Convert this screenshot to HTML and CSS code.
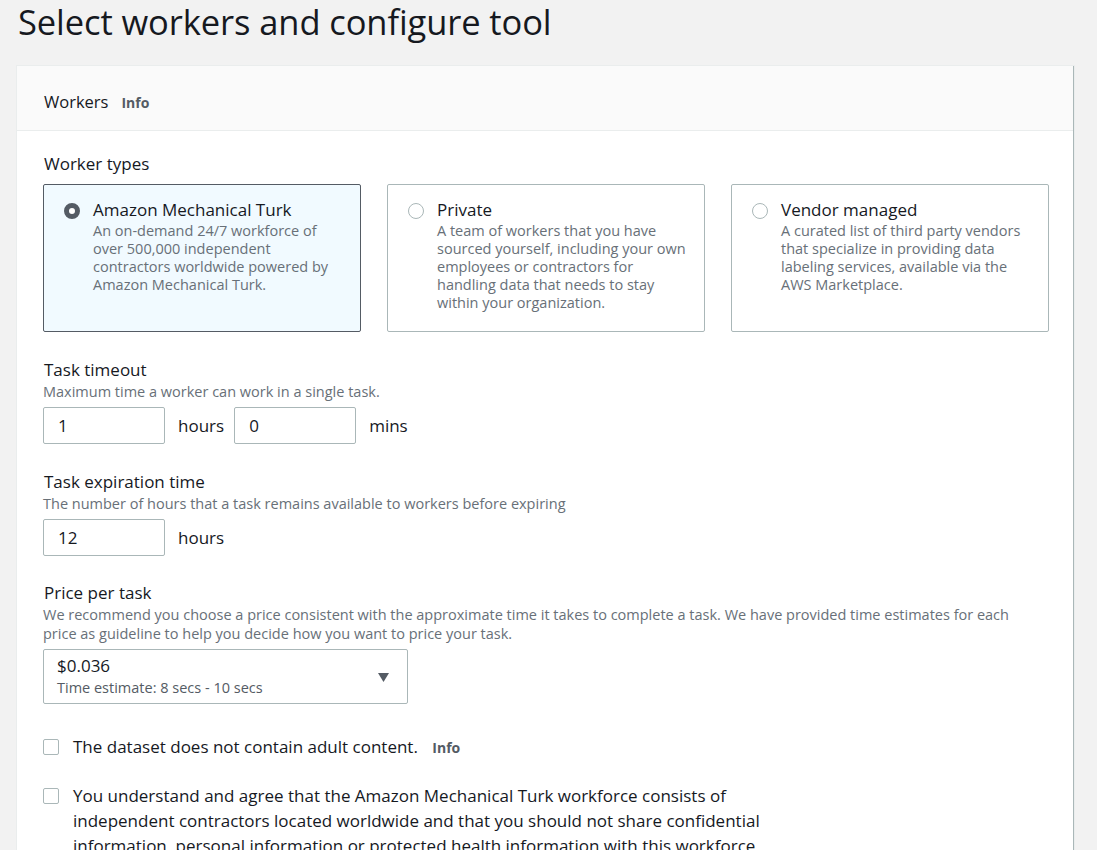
FILE: index.html
```html
<!DOCTYPE html>
<html lang="en">
<head>
<meta charset="utf-8">
<title>Select workers and configure tool</title>
<link rel="stylesheet" href="styles.css">
</head>
<body>
<h1 class="page-title">Select workers and configure tool</h1>
<section class="panel">
  <header class="panel-header">
    <h2 class="panel-title">Workers</h2>
    <span class="info">Info</span>
  </header>
  <div class="panel-body">
    <div class="field">
      <div class="label">Worker types</div>
      <div class="tiles">
        <label class="tile selected">
          <span class="radio checked"></span>
          <span class="tile-text">
            <span class="tile-title">Amazon Mechanical Turk</span>
            <span class="tile-desc">An on-demand 24/7 workforce of over 500,000 independent contractors worldwide powered by Amazon Mechanical Turk.</span>
          </span>
        </label>
        <label class="tile">
          <span class="radio"></span>
          <span class="tile-text">
            <span class="tile-title">Private</span>
            <span class="tile-desc">A team of workers that you have sourced yourself, including your own employees or contractors for handling data that needs to stay within your organization.</span>
          </span>
        </label>
        <label class="tile">
          <span class="radio"></span>
          <span class="tile-text">
            <span class="tile-title">Vendor managed</span>
            <span class="tile-desc">A curated list of third party vendors that specialize in providing data labeling services, available via the AWS Marketplace.</span>
          </span>
        </label>
      </div>
    </div>

    <div class="field">
      <div class="label">Task timeout</div>
      <div class="desc">Maximum time a worker can work in a single task.</div>
      <div class="input-row">
        <div class="input">1</div><span class="unit">hours</span>
        <div class="input">0</div><span class="unit">mins</span>
      </div>
    </div>

    <div class="field tight">
      <div class="label">Task expiration time</div>
      <div class="desc">The number of hours that a task remains available to workers before expiring</div>
      <div class="input-row">
        <div class="input">12</div><span class="unit">hours</span>
      </div>
    </div>

    <div class="field">
      <div class="label">Price per task</div>
      <div class="desc wide">We recommend you choose a price consistent with the approximate time it takes to complete a task. We have provided time estimates for each price as guideline to help you decide how you want to price your task.</div>
      <div class="select">
        <div class="select-text">
          <div class="select-value">$0.036</div>
          <div class="select-sub">Time estimate: 8 secs - 10 secs</div>
        </div>
        <svg class="caret" width="11" height="9" viewBox="0 0 11 9"><path d="M0 0h11L5.5 9z" fill="#545b64"/></svg>
      </div>
    </div>

    <div class="check-row">
      <span class="checkbox"></span>
      <span class="check-text">The dataset does not contain adult content. <span class="info">Info</span></span>
    </div>

    <div class="check-row">
      <span class="checkbox"></span>
      <span class="check-text narrow">You understand and agree that the Amazon Mechanical Turk workforce consists of independent contractors located worldwide and that you should not share confidential information, personal information or protected health information with this workforce.</span>
    </div>
  </div>
</section>
</body>
</html>
```

FILE: styles.css
```css
html, body {
  margin: 0;
  padding: 0;
  background: #f2f2f2;
  font-family: "Open Sans", "Noto Sans", Arial, sans-serif;
  color: #16191f;
}

body {
  padding: 0 24px 0 17px;
  overflow: hidden;
  height: 850px;
}

.page-title {
  margin: 0;
  padding: 2px 0 0 1px;
  height: 64px;
  font-size: 34.5px;
  font-weight: 400;
  line-height: 40px;
  color: #16191f;
  letter-spacing: -0.1px;
}

.panel {
  width: 1056px;
  background: #fff;
  border-right: 1px solid #aab7b8;
  box-shadow: 0 0 0 1px #eaeded;
}

.panel-header {
  display: flex;
  align-items: baseline;
  gap: 13px;
  height: 65px;
  box-sizing: border-box;
  padding: 25px 27px 0;
  background: #fafafa;
  border-bottom: 1px solid #eaeded;
}

.panel-title {
  margin: 0;
  font-size: 16.5px;
  font-weight: 400;
  line-height: 22px;
}

.info {
  font-size: 14px;
  font-weight: 700;
  color: #545b64;
}

.panel-body {
  padding: 21px 26px 0;
}

.field {
  margin-bottom: 26px;
}

.field.tight {
  margin-bottom: 25px;
}

.label {
  font-size: 17px;
  line-height: 24px;
  padding-left: 1px;
}

.desc {
  font-size: 14.5px;
  line-height: 19px;
  color: #687078;
  margin-bottom: 6px;
}

.desc.wide {
  max-width: 980px;
  margin-bottom: 6px;
}

.tiles {
  display: flex;
  gap: 26px;
  margin-top: 8px;
}

.tile {
  width: 318px;
  height: 148px;
  box-sizing: border-box;
  border: 1px solid #aab7b8;
  border-radius: 2px;
  display: flex;
  gap: 13px;
  padding: 13px 12px 0 20px;
  background: #fff;
}

.tile.selected {
  background: #f1faff;
  border-color: #545b64;
}

.radio {
  flex: none;
  width: 16px;
  height: 16px;
  box-sizing: border-box;
  border: 1px solid #aab7b8;
  border-radius: 50%;
  margin-top: 5px;
  background: #fff;
}

.radio.checked {
  border: 5px solid #545b64;
}

.tile-text {
  display: flex;
  flex-direction: column;
  width: 258px;
}

.tile-title {
  font-size: 17px;
  line-height: 24px;
}

.tile-desc {
  font-size: 14.5px;
  line-height: 18px;
  color: #687078;
}

.input-row {
  display: flex;
  align-items: center;
}

.input {
  width: 122px;
  height: 37px;
  box-sizing: border-box;
  border: 1px solid #aab7b8;
  border-radius: 2px;
  padding: 0 14px;
  font-size: 17px;
  line-height: 35px;
}

.unit {
  font-size: 17px;
  margin: 0 10px 0 13px;
}

.select {
  width: 365px;
  height: 55px;
  box-sizing: border-box;
  border: 1px solid #aab7b8;
  border-radius: 2px;
  display: flex;
  align-items: flex-start;
  justify-content: space-between;
  padding: 5px 18px 0 13px;
}

.select-value {
  font-size: 17px;
  line-height: 22px;
}

.select-sub {
  font-size: 14.5px;
  line-height: 22px;
  color: #545b64;
}

.caret {
  align-self: center;
  margin-top: -3px;
}

.check-row {
  display: flex;
  gap: 14px;
  margin-top: 30px;
}

.check-row + .check-row {
  margin-top: 23px;
}

.checkbox {
  flex: none;
  width: 16px;
  height: 16px;
  box-sizing: border-box;
  border: 1px solid #aab7b8;
  border-radius: 2px;
  margin-top: 5px;
  background: #fff;
}

.check-text {
  font-size: 17px;
  line-height: 25px;
}

.check-text .info {
  margin-left: 10px;
}

.check-text.narrow {
  max-width: 705px;
}
```
